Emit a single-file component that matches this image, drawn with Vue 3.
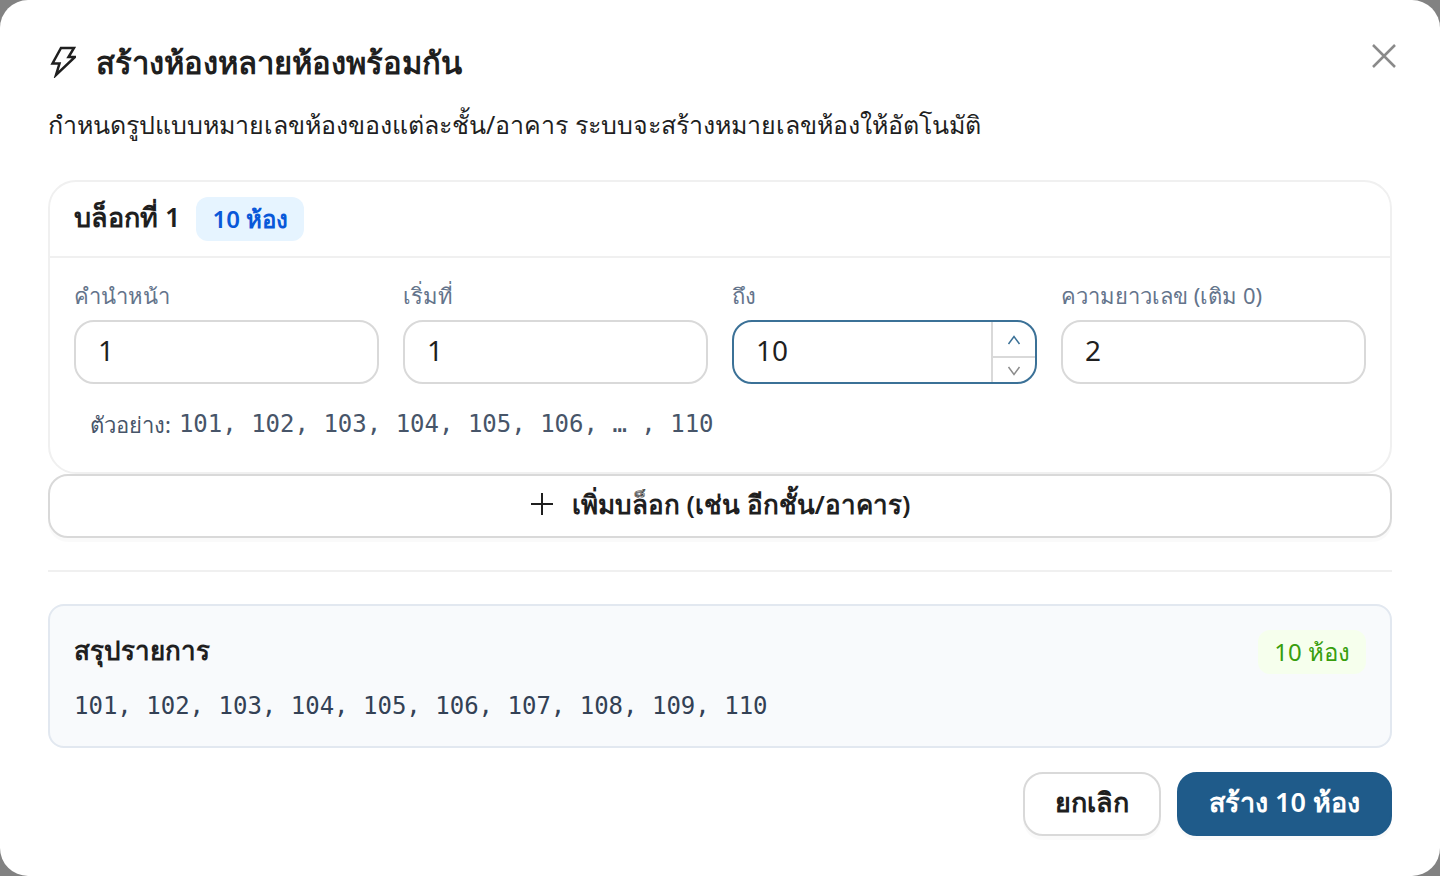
<script setup>
import { computed, ref } from 'vue'

const prefix = ref('1')
const start = ref(1)
const end = ref(10)
const digits = ref(2)

const rooms = computed(() => {
  const list = []
  for (let n = Number(start.value); n <= Number(end.value) && list.length < 500; n++) {
    list.push(prefix.value + String(n).padStart(Number(digits.value), '0'))
  }
  return list
})
const sample = computed(() =>
  rooms.value.length > 7
    ? rooms.value.slice(0, 6).join(', ') + ', … , ' + rooms.value[rooms.value.length - 1]
    : rooms.value.join(', ')
)
</script>

<template>
  <main class="dialog" role="dialog" aria-labelledby="dialog-title">
    <header class="head">
      <div class="title-row">
        <svg class="bolt" viewBox="0 0 28 32" aria-hidden="true">
          <path d="M13 2H26L20.500 11H27L8 29L11.500 17.500H4.500Z" />
        </svg>
        <h1 id="dialog-title">สร้างห้องหลายห้องพร้อมกัน</h1>
      </div>
      <button class="close" type="button" aria-label="ปิด">
        <svg viewBox="0 0 28 28" aria-hidden="true"><path d="M3 3L25 25M25 3L3 25" /></svg>
      </button>
    </header>
    <p class="intro">กำหนดรูปแบบหมายเลขห้องของแต่ละชั้น/อาคาร ระบบจะสร้างหมายเลขห้องให้อัตโนมัติ</p>

    <section class="card">
      <div class="card-head">
        <h2>บล็อกที่ 1</h2>
        <span class="tag blue">{{ rooms.length }} ห้อง</span>
      </div>
      <div class="card-body">
        <div class="fields">
          <div class="field">
            <label for="prefix">คำนำหน้า</label>
            <div class="control"><input id="prefix" v-model="prefix" type="text" /></div>
          </div>
          <div class="field">
            <label for="start">เริ่มที่</label>
            <div class="control"><input id="start" v-model="start" type="number" /></div>
          </div>
          <div class="field">
            <label for="end">ถึง</label>
            <div class="control active">
              <input id="end" v-model="end" type="number" />
              <div class="steps">
                <button class="up" type="button" aria-label="เพิ่ม" @click="end++">
                  <svg viewBox="0 0 14 10" aria-hidden="true"><path d="M1.500 9L7 1.500L12.500 9" /></svg>
                </button>
                <button class="down" type="button" aria-label="ลด" @click="end--">
                  <svg viewBox="0 0 14 10" aria-hidden="true"><path d="M1.500 1L7 8.500L12.500 1" /></svg>
                </button>
              </div>
            </div>
          </div>
          <div class="field">
            <label for="digits">ความยาวเลข (เติม 0)</label>
            <div class="control"><input id="digits" v-model="digits" type="number" /></div>
          </div>
        </div>
        <p class="sample"><span>ตัวอย่าง:</span><code>{{ sample }}</code></p>
      </div>
    </section>

    <button class="btn add" type="button">
      <svg viewBox="0 0 24 24" aria-hidden="true"><path d="M12 1V23M1 12H23" /></svg>
      เพิ่มบล็อก (เช่น อีกชั้น/อาคาร)
    </button>

    <hr />

    <section class="summary">
      <div class="summary-head">
        <h2>สรุปรายการ</h2>
        <span class="tag green">{{ rooms.length }} ห้อง</span>
      </div>
      <code>{{ rooms.join(', ') }}</code>
    </section>

    <footer class="actions">
      <button class="btn" type="button">ยกเลิก</button>
      <button class="btn primary" type="button">สร้าง {{ rooms.length }} ห้อง</button>
    </footer>
  </main>
</template>

<style>
body {
  background: #828282;
}
</style>

<style scoped>
* {
  box-sizing: border-box;
}
.dialog {
  min-height: 100vh;
  padding: 40px 48px;
  border-radius: 28px;
  background: #fff;
  color: #1f1f1f;
  font-family: "Noto Sans", sans-serif;
  font-size: 25px;
}
h1,
h2,
p {
  margin: 0;
}
svg {
  display: block;
  fill: none;
  stroke: currentColor;
  stroke-width: 2;
}
button,
input {
  font: inherit;
  color: inherit;
}
.head {
  display: flex;
  justify-content: space-between;
  align-items: flex-start;
}
.title-row {
  display: flex;
  align-items: center;
  gap: 20px;
}
.bolt {
  width: 28px;
  height: 32px;
  stroke-width: 2.500;
}
h1 {
  font-size: 31px;
  font-weight: 600;
  line-height: 44px;
}
.close {
  padding: 2px;
  margin-right: -8px;
  border: 0;
  background: none;
  color: #8a8a8a;
  cursor: pointer;
}
.close svg {
  width: 28px;
  height: 28px;
  stroke-width: 2.500;
}
.intro {
  margin-top: 18px;
  line-height: 44px;
}
.card {
  margin-top: 34px;
  border: 2px solid #f0f0f0;
  border-radius: 28px;
}
.card-head {
  display: flex;
  align-items: center;
  gap: 16px;
  height: 76px;
  padding: 0 24px;
  border-bottom: 2px solid #f0f0f0;
}
h2 {
  font-size: 26px;
  font-weight: 600;
  line-height: 40px;
  padding-bottom: 4px;
}
.card-head h2 {
  font-size: 27px;
}
.tag {
  padding: 0 16px;
  border-radius: 12px;
  font-size: 24px;
  line-height: 44px;
}
.tag.blue {
  background: #e6f4ff;
  color: #0958d9;
  font-weight: 600;
}
.tag.green {
  background: #f6ffed;
  color: #389e0d;
}
.card-body {
  padding: 18px 24px 28px;
}
.fields {
  display: grid;
  grid-template-columns: repeat(4, minmax(0, 1fr));
  gap: 24px;
}
.field label {
  display: block;
  margin-bottom: 6px;
  color: #64748b;
  font-size: 22px;
  line-height: 38px;
}
.control {
  display: flex;
  height: 64px;
  border: 2px solid #d9d9d9;
  border-radius: 20px;
  overflow: hidden;
}
.control.active {
  border-color: #3b7197;
}
.control input {
  flex: 1;
  min-width: 0;
  padding: 0 22px 4px;
  border: 0;
  outline: 0;
  background: none;
  font-size: 28px;
  appearance: textfield;
}
.control input::-webkit-inner-spin-button {
  appearance: none;
  margin: 0;
}
.steps {
  display: flex;
  flex-direction: column;
  width: 44px;
  border-left: 2px solid #d9d9d9;
}
.steps button {
  display: flex;
  align-items: center;
  justify-content: center;
  padding: 2px 0 0;
  border: 0;
  background: none;
  color: #8c8c8c;
}
.steps .up {
  flex: 3;
  color: #3b7197;
}
.steps .down {
  flex: 2;
  border-top: 2px solid #d9d9d9;
}
.steps svg {
  width: 14px;
  height: 10px;
  stroke-width: 1.500;
}
code {
  font-family: "DejaVu Sans Mono", "Liberation Mono", monospace;
  font-size: 24px;
}
.sample {
  display: flex;
  align-items: center;
  gap: 8px;
  margin-top: 20px;
  padding: 0 16px;
  color: #475569;
  font-size: 22px;
  line-height: 40px;
}
.btn {
  display: flex;
  align-items: center;
  justify-content: center;
  height: 64px;
  padding: 0 30px 4px;
  border: 2px solid #d9d9d9;
  border-radius: 20px;
  background: #fff;
  box-shadow: 0 4px 0 rgba(0, 0, 0, 0.02);
  font-size: 27px;
  font-weight: 600;
  cursor: pointer;
}
.btn.add {
  gap: 18px;
  width: 100%;
  font-size: 26px;
}
.add svg {
  width: 24px;
  height: 24px;
}
hr {
  margin: 32px 0;
  border: 0;
  border-top: 2px solid #f0f0f0;
}
.summary {
  padding: 24px 24px 22px;
  border: 2px solid #e2e8f0;
  border-radius: 16px;
  background: #f8fafc;
}
.summary-head {
  display: flex;
  align-items: center;
  justify-content: space-between;
  margin-bottom: 14px;
}
.summary code {
  display: block;
  color: #334155;
  line-height: 36px;
}
.actions {
  display: flex;
  justify-content: flex-end;
  gap: 16px;
  margin-top: 24px;
}
.btn.primary {
  border-color: #1f5b8a;
  background: #1f5b8a;
  color: #fff;
}
</style>
